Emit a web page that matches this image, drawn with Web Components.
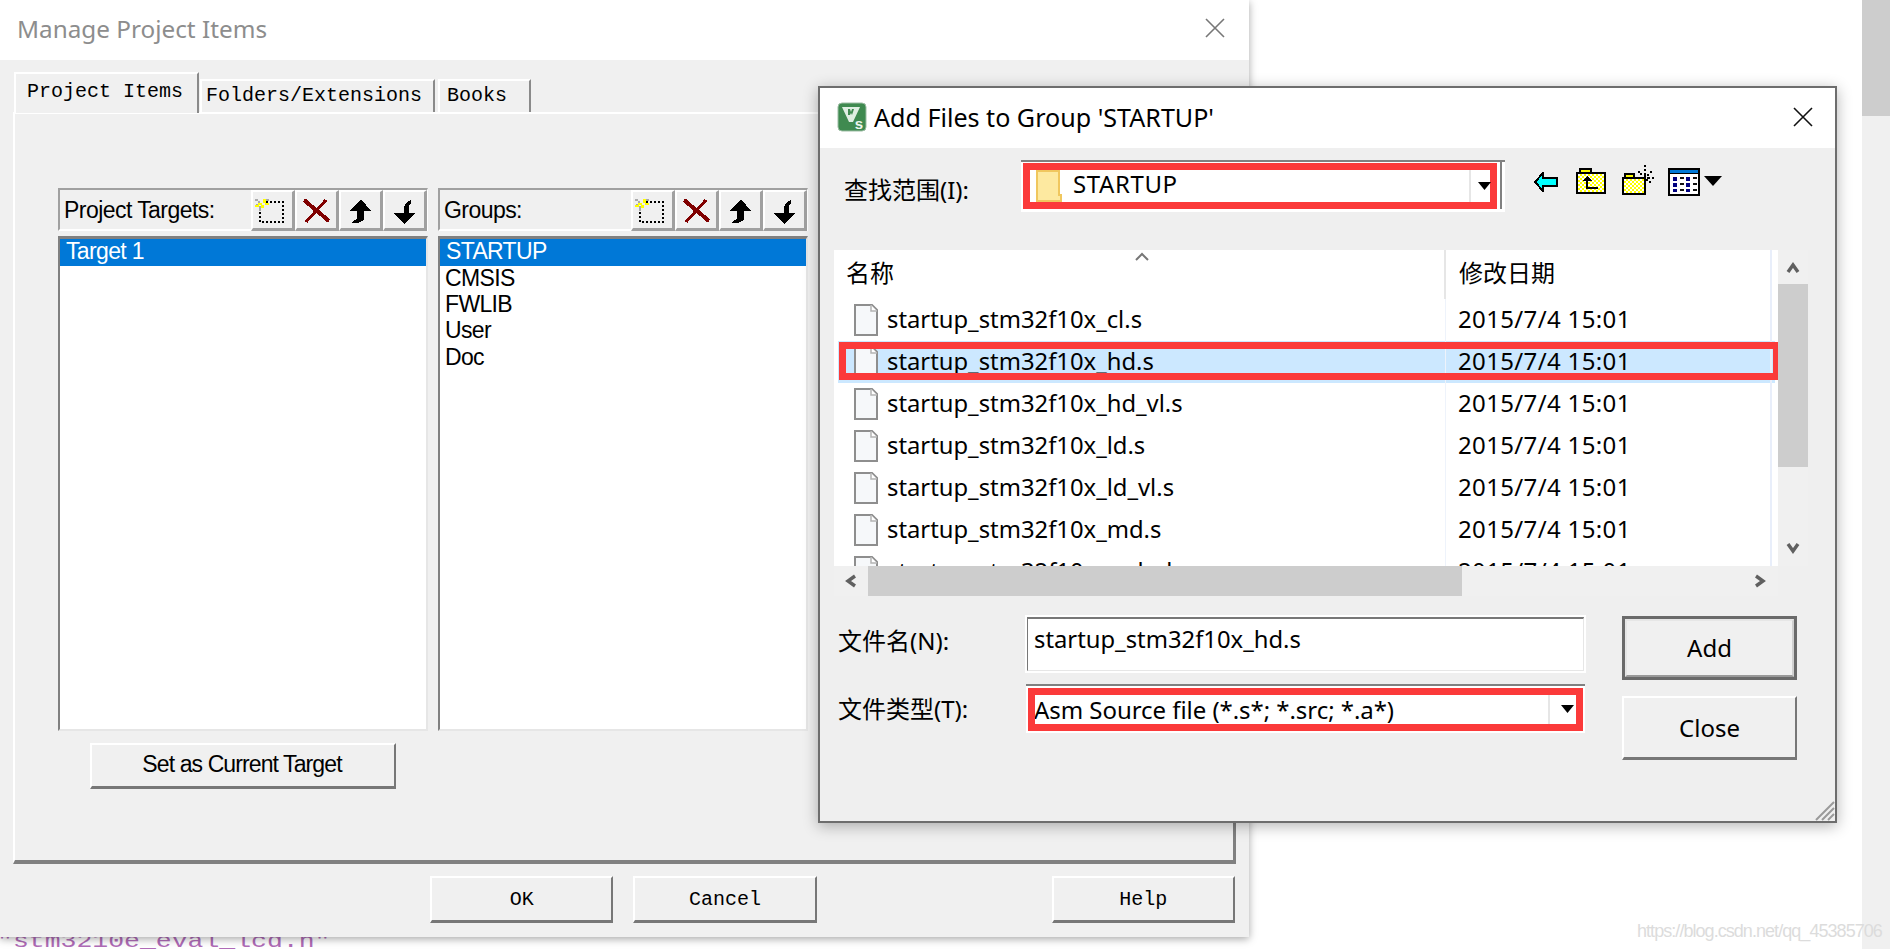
<!DOCTYPE html>
<html>
<head>
<meta charset="utf-8">
<title>Manage Project Items</title>
<style>
html, body { margin: 0; padding: 0; background: #fff; overflow: hidden; }
</style>
</head>
<body>
<desk-page>
  <manage-dialog></manage-dialog>
  <add-files-dialog></add-files-dialog>
</desk-page>

<script>
const UI_FONT = '"Noto Sans", "Noto Sans CJK SC", sans-serif';
const ARIAL = '"Liberation Sans", Arial, sans-serif';
const MONO = '"Liberation Mono", monospace';

function mount(el, css, markup) {
    const root = el.attachShadow({ mode: 'open' });
    root.innerHTML = `<style>${css}</style>${markup}`;
    return root;
}

class DeskPage extends HTMLElement {
    constructor() {
        super();
        mount(this, `
            :host { display: flex; position: relative; width: 1890px; height: 949px; overflow: hidden; background: #fff; }
            .code { position: absolute; left: -3px; top: 930px; font: 21px/24px ${MONO}; color: #b06cb8; white-space: pre;
                    transform: scaleX(1.26); transform-origin: 0 0; }
            .main { flex: 1; position: relative; }
            .bar { width: 28px; background: #f0f0f0; }
            .thumb { height: 116px; background: #cdcdcd; }
            .mark { position: absolute; left: 1637px; top: 919px; font: 18px/24px ${ARIAL}; color: #dcdcdc; white-space: nowrap; letter-spacing: -0.95px; }
        `, `
            <div class="code">"stm3210e_eval_lcd.h"</div>
            <div class="main"><slot></slot></div>
            <div class="bar"><div class="thumb"></div></div>
            <div class="mark">https://blog.csdn.net/qq_45385706</div>
        `);
    }
}

// raised push button, 3px shade on the lower right
class BevelButton extends HTMLElement {
    constructor() {
        super();
        mount(this, `
            :host { display: flex; box-sizing: border-box; align-items: center; justify-content: center;
                    border: 2px solid #fff; border-right: 2px solid #777; border-bottom: 3px solid #777;
                    background: #f0f0f0; color: #000; white-space: nowrap; }
            :host([big]) { outline: 3px solid #6a6a6a; outline-offset: -3px; border: 5px solid #e6e6e6; border-bottom-color: #999; border-right-color: #d0d0d0; }
        `, `<slot></slot>`);
    }
}

const TOOL_ICONS = {
    add: `<path fill="none" stroke="#000" stroke-width="2" stroke-dasharray="2 2" d="M15 11h17v20H9V19"/>
          <path fill="#aaa" d="M4 8h3v2H4zM7 10h2v2H7zM15 8h3v2h-3zM8 15h2v5H8zM5 13h2v2H5z"/>
          <path fill="#ff0" d="M7 12h4v2H7zM12 8h3v4h-3zM10 14h3v3h-3zM4 14h4v2H4zM14 12h4v2h-4z"/>`,
    del: `<path fill="none" stroke="#800000" stroke-width="4" d="M9 9l25 21"/><path fill="none" stroke="#800000" stroke-width="3" d="M31 9L11 31"/>`,
    up: `<path fill="#000" d="M22 8L11 20h7v8l-5 3v1h6l6-3v-9h7z"/>`,
    down: `<path fill="#000" d="M28 8v1l-5 3-2 4v6H10l11 11 11-11H26V14l2-2z"/>`
};

class ToolButton extends HTMLElement {
    constructor() {
        super();
        const icon = TOOL_ICONS[this.getAttribute('icon')];
        mount(this, `
            :host { display: block; box-sizing: border-box; width: 44px; height: 41px;
                    border: 2px solid #fff; border-right: 3px solid #a0a0a0; border-bottom: 3px solid #a0a0a0; background: #f0f0f0; }
            svg { display: block; margin: -1px 0 0 -2px; }
        `, `<svg width="44" height="40" shape-rendering="crispEdges">${icon}</svg>`);
    }
}

class ItemList extends HTMLElement {
    constructor() {
        super();
        const items = (this.getAttribute('items') || '').split('|');
        const rows = items.map((t, i) => `<div class="row${i === 0 ? ' sel' : ''}">${t}</div>`).join('');
        mount(this, `
            :host { display: block; width: 370px; font: 23px/26px ${ARIAL}; letter-spacing: -0.65px; color: #000; }
            .head { box-sizing: border-box; height: 43px; display: flex; align-items: stretch;
                    border-top: 2px solid #a0a0a0; border-left: 2px solid #a0a0a0; border-bottom: 2px solid #fff; border-right: 1px solid #fff; }
            .label { flex: 1; padding-left: 4px; line-height: 40px; white-space: nowrap; letter-spacing: -0.55px; }
            .tools { display: flex; }
            .box { box-sizing: border-box; height: 495px; margin-top: 5px; background: #fff;
                   border-top: 3px solid #808080; border-left: 2px solid #808080; border-right: 2px solid #e6e6e6; border-bottom: 2px solid #e6e6e6; }
            .row { height: 26.2px; padding-left: 5px; line-height: 25px; white-space: nowrap; }
            .sel { background: #0078d7; color: #fff; padding-left: 6px; height: 27px; }
        `, `
            <div class="head">
                <div class="label">${this.getAttribute('label')}</div>
                <div class="tools">
                    <tool-button icon="add"></tool-button>
                    <tool-button icon="del"></tool-button>
                    <tool-button icon="up"></tool-button>
                    <tool-button icon="down"></tool-button>
                </div>
            </div>
            <div class="box">${rows}</div>
        `);
    }
}

class ManageDialog extends HTMLElement {
    constructor() {
        super();
        mount(this, `
            :host { display: block; width: 1249px; height: 937px; background: #f0f0f0; position: relative; box-shadow: 0 2px 8px rgba(0,0,0,.35); }
            .title { height: 60px; background: #fff; display: flex; align-items: center; justify-content: space-between;
                     padding: 0 24px 4px 17px; box-sizing: border-box; font: 24.300px ${UI_FONT}; color: #8d8d8d; }
            .tabs { display: flex; align-items: flex-end; height: 39px; margin: 13px 0 0 14px; font: 20px/30px ${MONO}; color: #000; }
            .tab { box-sizing: border-box; height: 33px; border-top: 2px solid #fff; border-left: 2px solid #fff; border-right: 2px solid #8a8a8a; white-space: nowrap; }
            .tab.on { height: 41px; padding: 3px 0 0 11px; position: relative; top: 1px; z-index: 1; background: #f0f0f0; width: 185px; }
            .tab.f { width: 235px; margin-left: 1px; padding-left: 4px; }
            .tab.b { width: 93px; margin-left: 3px; padding-left: 7px; }
            .panel { box-sizing: border-box; margin: 0 13px 0 13px; height: 752px; padding: 74px 0 0 43px;
                     border-top: 2px solid #fff; border-left: 2px solid #fff; border-bottom: 4px solid #808080; border-right: 3px solid #808080; font: 23px ${ARIAL}; }
            .cols { display: flex; gap: 10px; }
            .set { width: 306px; height: 46px; margin: 12px 0 0 32px; padding: 0 2px 2px 0; letter-spacing: -0.9px; }
            .foot { display: flex; gap: 20px; padding: 12px 14px 0 430px; font: 20px ${MONO}; }
            .foot bevel-button { width: 184px; height: 47px; }
            .foot .help { margin-left: 215px; }
            svg { display: block; }
        `, `
            <div class="title"><span>Manage Project Items</span>
                <svg width="20" height="20"><path d="M1 1l18 18M19 1L1 19" stroke="#777" stroke-width="1.6" fill="none"/></svg></div>
            <div class="tabs">
                <div class="tab on">Project Items</div>
                <div class="tab f">Folders/Extensions</div>
                <div class="tab b">Books</div>
            </div>
            <div class="panel">
                <div class="cols">
                    <item-list label="Project Targets:" items="Target 1"></item-list>
                    <item-list label="Groups:" items="STARTUP|CMSIS|FWLIB|User|Doc"></item-list>
                </div>
                <bevel-button class="set">Set as Current Target</bevel-button>
            </div>
            <div class="foot">
                <bevel-button>OK</bevel-button>
                <bevel-button>Cancel</bevel-button>
                <bevel-button class="help">Help</bevel-button>
            </div>
        `);
    }
}

class FileRow extends HTMLElement {
    constructor() {
        super();
        mount(this, `
            :host { display: grid; grid-template-columns: 607px 325px; height: 42px; margin-left: 4px; width: 937px; align-items: center; white-space: nowrap; }
            :host([selected]) { background: #cce8ff; }
            .name { display: flex; align-items: center; gap: 9px; padding-left: 16px; }
            .name span { position: relative; top: -1px; font-size: 23.8px; }
            .date { box-sizing: border-box; height: 42px; padding-left: 12px; line-height: 40px; letter-spacing: 0.35px; border-left: 1px solid #eef3fb; }
            svg { display: block; flex: none; }
        `, `
            <div class="name">
                <svg width="24" height="32"><path d="M1 1h17l5 5v25H1z" fill="#f6f8fa" stroke="#8e8e8e" stroke-width="2"/><path d="M17 1v6h6" fill="#fff" stroke="#b4b4b4" stroke-width="1.5"/></svg>
                <span>${this.getAttribute('name')}</span>
            </div>
            <div class="date">2015/7/4 15:01</div>
        `);
    }
}

class ComboBox extends HTMLElement {
    constructor() {
        super();
        mount(this, `
            :host { display: block; box-sizing: border-box; padding: 1px 0 0 2px; background: #fff; border-top: 2px solid #808080; }
            .red { box-sizing: border-box; height: 100%; display: flex; align-items: center; background: #fff; border: 7px solid #fb3a3a; }
            .text { flex: 1; white-space: nowrap; overflow: hidden; }
            .btn { align-self: stretch; width: 26px; border-left: 2px solid #e6e6e6; display: flex; align-items: center; justify-content: flex-end; }
            svg { display: block; }
            :host([wide]) { padding: 1px 8px 3px 2px; position: relative; }
            :host([wide]) .btn { width: 19px; justify-content: center; }
            :host([wide]) .edge { position: absolute; right: 3px; top: 0; bottom: 3px; width: 2px; background: #808080; }
            :host([wide]) svg { position: relative; left: 4px; flex: none; }
        `, `
            <div class="red">
                <div class="text"><slot></slot></div>
                <div class="btn"><svg width="16" height="9"><path d="M1 0h13L7.500 8z" fill="#000"/></svg></div>
            </div>
            <div class="edge"></div>
        `);
    }
}

class ScrollBar extends HTMLElement {
    constructor() {
        super();
        const vert = this.hasAttribute('vertical');
        const chev = d => `<svg width="14" height="14"><path d="${d}" fill="none" stroke="#606060" stroke-width="3.4"/></svg>`;
        const a = vert ? 'M2 12l5-7 5 7' : 'M11 2L4 7l7 5';
        const b = vert ? 'M2 2l5 7 5-7' : 'M2 2l7 5-7 5';
        mount(this, `
            :host { display: flex; flex-direction: ${vert ? 'column' : 'row'}; background: #f0f0f0; align-items: stretch; }
            .end { flex: none; display: flex; align-items: center; justify-content: center; }
            .thumb { background: #cdcdcd; flex: none; }
            .rest { flex: 1; }
            svg { display: block; }
            :host([vertical]) .end { height: 34px; }
            :host([vertical]) .thumb { height: 183px; }
            :host(:not([vertical])) .end { width: 34px; }
            :host(:not([vertical])) .thumb { width: 594px; }
        `, `
            <div class="end">${chev(a)}</div>
            <div class="thumb"></div>
            <div class="rest"></div>
            <div class="end">${chev(b)}</div>
        `);
    }
}

const FILE_TOOLS = `
<svg class="t1" width="24" height="20" shape-rendering="crispEdges"><path d="M1 10L9 1v5h14v8H9v5z" fill="#0ff" stroke="#000" stroke-width="2"/></svg>
<svg class="t2" width="30" height="26" shape-rendering="crispEdges">
  <rect x="4" y="1" width="11" height="4" fill="#ff0" stroke="#000" stroke-width="2"/>
  <rect x="1" y="5" width="28" height="20" fill="url(#chk)" stroke="#000" stroke-width="2"/>
  <path d="M11 8l-5 5h10zM10 13h2v6h10v2H10z" fill="#000"/></svg>
<svg class="t3" width="32" height="30" shape-rendering="crispEdges">
  <rect x="3" y="9" width="9" height="4" fill="#ff0" stroke="#000" stroke-width="2"/>
  <rect x="1" y="13" width="22" height="16" fill="url(#chk)" stroke="#000" stroke-width="2"/>
  <path d="M22 0h2v2h-2zM22 4h2v2h-2zM22 8h2v6h-2zM16 6h2v2h-2zM28 6h2v2h-2zM25 9h2v2h-2zM18 8h2v2h-2zM30 12h2v2h-2zM25 12h3v2h-3zM27 16h2v2h-2zM24 14h2v2h-2z" fill="#000"/></svg>
<svg class="t4" width="32" height="28" shape-rendering="crispEdges">
  <rect x="1" y="1" width="30" height="26" fill="#fff" stroke="#000" stroke-width="2"/>
  <rect x="2" y="2" width="28" height="3" fill="#0078d7"/><rect x="2" y="5" width="28" height="1" fill="#000"/>
  <path d="M5 9h4v4H5zM18 9h4v4h-4zM5 15h4v4H5zM18 15h4v4h-4zM5 21h4v3H5zM18 21h4v3h-4z" fill="#00007f"/>
  <path d="M12 9h4v2h-4zM25 9h4v2h-4zM12 15h4v2h-4zM25 15h4v2h-4zM12 21h4v2h-4zM25 21h4v2h-4z" fill="#111"/></svg>
<svg class="t5" width="18" height="10"><path d="M0 0h18L9 10z" fill="#000"/></svg>`;

class AddFilesDialog extends HTMLElement {
    constructor() {
        super();
        const names = ['cl', 'hd', 'hd_vl', 'ld', 'ld_vl', 'md', 'md_vl'];
        const rows = names.map((n, i) =>
            `<file-row name="startup_stm32f10x_${n}.s"${i === 1 ? ' selected' : ''}></file-row>`).join('');
        mount(this, `
            :host { position: absolute; left: 818px; top: 86px; width: 1019px; height: 737px; box-sizing: border-box;
                    border: 2px solid #6d6d6d; background: #efefef; box-shadow: 0 3px 14px rgba(0,0,0,.3);
                    font: 24px ${UI_FONT}; color: #000; }
            .title { height: 60px; box-sizing: border-box; padding: 0 22px 3px 17px; background: #fff; display: flex; align-items: center; font-size: 25.100px; }
            .title span { flex: 1; margin-left: 7px; white-space: nowrap; }
            svg { display: block; flex: none; }
            .look { display: flex; height: 52px; margin-top: 12px; padding-left: 24px; align-items: flex-start; }
            .cap { white-space: nowrap; }
            .look .cap { width: 177px; line-height: 60px; }
            .look combo-box { width: 484px; height: 52px; }
            .start { display: flex; align-items: center; gap: 11px; padding-left: 6px; }
            .start span { position: relative; top: -3px; letter-spacing: 0.6px; }
            .tools { position: relative; display: flex; align-items: flex-start; margin-left: 29px; padding-top: 5px; }
            .t1 { margin: 7px 0 0 0; } .t2 { margin: 3px 0 0 18px; } .t3 { margin: 0 0 0 16px; } .t4 { margin: 3px 0 0 14px; } .t5 { margin: 11px 0 0 4px; }
            .grid { display: grid; grid-template-columns: 944px 30px; grid-template-rows: 316px 30px; margin: 38px 0 0 14px; }
            .list { position: relative; background: #fff; overflow: hidden; }
            .head { display: grid; grid-template-columns: 611px 325px; height: 49px; line-height: 46px; }
            .head div { padding-left: 12px; }
            .head div + div { padding-left: 13px; border-left: 2px solid #e6e6e6; margin-left: -1px; }
            .right { position: absolute; left: 936px; top: 0; width: 2px; height: 316px; background: #e8eefa; }
            .sort { position: absolute; left: 300px; top: 2px; }
            .pick { position: absolute; left: 5px; top: 92px; width: 941px; height: 38px; box-sizing: border-box; border: 7px solid #fb3a3a; z-index: 2; }
            .form { display: flex; margin-top: 20px; padding-left: 18px; }
            .fields { width: 747px; }
            .field { display: flex; align-items: center; }
            .field .cap { width: 188px; position: relative; top: -1px; }
            .field:first-child .cap { top: -5px; }
            .input { box-sizing: border-box; width: 559px; height: 56px; padding: 0 6px; line-height: 40px; font-size: 23.8px; background: #fff;
                     border-top: 3px solid #777; border-left: 2px solid #777; border-right: 2px solid #e6e6e6; border-bottom: 2px solid #e6e6e6; outline: 2px solid #fff; outline-offset: -1px; }
            .field combo-box { width: 559px; height: 49px; padding: 2px; }
            .field + .field { margin-top: 12px; }
            .asm { white-space: nowrap; letter-spacing: -0.05px; padding-left: 0; margin-left: -1px; }
            .btns { width: 175px; margin-left: 37px; }
            .btns bevel-button { width: 175px; height: 64px; padding-bottom: 2px; }
            .btns bevel-button + bevel-button { margin-top: 16px; padding-bottom: 1px; }
            .grip { position: absolute; right: 0; bottom: 0; }
        `, `
            <svg width="0" height="0" style="position:absolute"><defs>
                <pattern id="chk" width="4" height="4" patternUnits="userSpaceOnUse"><rect width="4" height="4" fill="#ff0"/><rect width="2" height="2" fill="#fff"/><rect x="2" y="2" width="2" height="2" fill="#fff"/></pattern>
            </defs></svg>
            <div class="title">
                <svg width="30" height="30">
                    <rect x="1" y="1" width="28" height="28" rx="4" fill="#3f8a50" stroke="#9dbda4"/>
                    <path d="M5 5h18l-7 15h-4z" fill="#dfeee2"/><path d="M11 7v6h2l1-2 1 2 2-6h-2l-1 3-1-3z" fill="#3f8a50"/>
                    <text x="22" y="27" font-size="15" font-weight="700" fill="#eef6f0" font-family="Liberation Sans" text-anchor="middle">s</text>
                </svg>
                <span>Add Files to Group 'STARTUP'</span>
                <svg width="20" height="20"><path d="M1 1l18 18M19 1L1 19" stroke="#111" stroke-width="1.600" fill="none"/></svg>
            </div>
            <div class="look">
                <div class="cap">查找范围(I):</div>
                <combo-box wide>
                    <div class="start">
                        <svg width="26" height="32"><path d="M1 1h22v24h2v6H1z" fill="#fde9a0" stroke="#f0c75e" stroke-width="2"/></svg>
                        <span>STARTUP</span>
                    </div>
                </combo-box>
                <div class="tools">${FILE_TOOLS}</div>
            </div>
            <div class="grid">
                <div class="list">
                    <div class="head"><div>名称</div><div>修改日期</div></div>
                    <svg class="sort" width="16" height="10"><path d="M2 8l6-6 6 6" fill="none" stroke="#777" stroke-width="2"/></svg>
                    <div class="right"></div>
                    ${rows}
                    <div class="pick"></div>
                </div>
                <scroll-bar vertical></scroll-bar>
                <scroll-bar></scroll-bar>
                <div></div>
            </div>
            <div class="form">
                <div class="fields">
                    <div class="field"><div class="cap">文件名(N):</div><div class="input">startup_stm32f10x_hd.s</div></div>
                    <div class="field"><div class="cap">文件类型(T):</div>
                        <combo-box><div class="asm">Asm Source file (*.s*; *.src; *.a*)</div></combo-box></div>
                </div>
                <div class="btns">
                    <bevel-button big>Add</bevel-button>
                    <bevel-button>Close</bevel-button>
                </div>
            </div>
            <svg class="grip" width="22" height="22"><path d="M21 3L3 21M21 9L9 21M21 15L15 21" stroke="#9a9a9a" stroke-width="2" fill="none"/></svg>
        `);
    }
}

customElements.define('bevel-button', BevelButton);
customElements.define('tool-button', ToolButton);
customElements.define('item-list', ItemList);
customElements.define('file-row', FileRow);
customElements.define('combo-box', ComboBox);
customElements.define('scroll-bar', ScrollBar);
customElements.define('manage-dialog', ManageDialog);
customElements.define('add-files-dialog', AddFilesDialog);
customElements.define('desk-page', DeskPage);
</script>
</body>
</html>
